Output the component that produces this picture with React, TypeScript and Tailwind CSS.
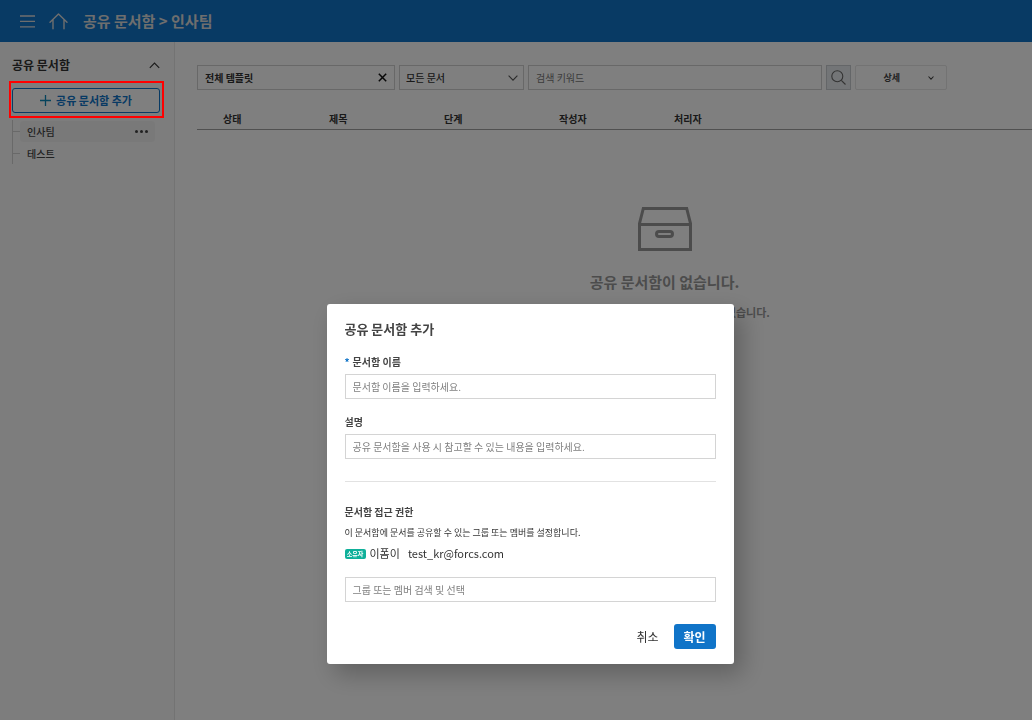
import React, { useState } from "react";

const FIELD =
  "block h-[25px] w-full border border-[#d4d4d4] bg-white px-[7px] text-[10px] text-[#333] outline-none placeholder:text-[#808080]";

function TreeItem({ label, active = false }: { label: string; active?: boolean }) {
  return (
    <li className="flex h-[22px] items-center">
      <span className="h-px w-[7px] bg-[#d2d2d2]" />
      <div
        className={
          active
            ? "flex h-[21px] flex-1 items-center justify-between rounded-sm bg-[#f2f2f2] px-[7px]"
            : "flex h-[21px] flex-1 items-center justify-between px-[7px]"
        }
      >
        <a href="#" className="text-[10px] font-medium text-[#444]">
          {label}
        </a>
        {active && (
          <button type="button" aria-label="더보기" className="flex gap-[2px]">
            <span className="size-[3px] rounded-full bg-[#444]" />
            <span className="size-[3px] rounded-full bg-[#444]" />
            <span className="size-[3px] rounded-full bg-[#444]" />
          </button>
        )}
      </div>
    </li>
  );
}

function Header() {
  return (
    <header className="flex h-[42px] items-center bg-[#1074c8] pl-5 text-[#ddd]">
      <button type="button" aria-label="메뉴">
        <svg width="15" height="13" viewBox="0 0 15 13" stroke="currentColor" strokeWidth="1.3">
          <path d="M0 1h15M0 6.3h15M0 11.8h15" />
        </svg>
      </button>
      <a href="#" aria-label="홈" className="ml-[14px]">
        <svg
          width="19"
          height="17"
          viewBox="0 0 19 17"
          fill="none"
          stroke="currentColor"
          strokeWidth="1.4"
          strokeLinecap="round"
          strokeLinejoin="round"
        >
          <path d="M1 9.2 9.5 1 18 9.2M4 6.8V15.8M15 6.8V15.8" />
        </svg>
      </a>
      <h1 className="ml-[15px] text-[15px] leading-6 font-bold">공유 문서함 &gt; 인사팀</h1>
    </header>
  );
}

function Sidebar() {
  return (
    <aside className="w-[175px] shrink-0 border-r border-[#e6e6e6] bg-[#fafafa] pr-[14px] pl-3">
      <div className="flex h-[46px] items-center justify-between">
        <h2 className="text-[12px] font-bold text-[#333]">공유 문서함</h2>
        <button type="button" aria-label="접기">
          <svg width="11" height="7" viewBox="0 0 11 7" fill="none" stroke="#333" strokeWidth="1.1">
            <path d="M.8 5.8 5.5 1l4.7 4.8" />
          </svg>
        </button>
      </div>
      <div className="relative">
        <button
          type="button"
          className="flex h-[25px] w-full items-center justify-center gap-[5px] rounded-[3px] border border-[#1074c8] bg-white text-[11px] font-bold text-[#1074c8]"
        >
          <svg width="11" height="11" viewBox="0 0 11 11" stroke="#0a86b8" strokeWidth="1.3">
            <path d="M0 5.5h11M5.5 0v11" />
          </svg>
          공유 문서함 추가
        </button>
        <span className="pointer-events-none absolute -top-[7px] -right-1 -bottom-[5px] -left-[3px] z-50 border-2 border-[#ff0000]" />
      </div>
      <ul className="mt-[7px] mr-[5px] border-l border-[#d2d2d2]">
        <TreeItem label="인사팀" active />
        <TreeItem label="테스트" />
      </ul>
    </aside>
  );
}

function Filters() {
  return (
    <form className="flex max-w-[750px] items-start gap-1" onSubmit={(e) => e.preventDefault()}>
      <div className="flex h-[25px] w-[198px] items-center border border-[#d0d0d0] bg-white pr-[7px]">
        <input
          aria-label="템플릿"
          defaultValue="전체 템플릿"
          className="h-full min-w-0 flex-1 bg-transparent pl-[7px] text-[10px] font-bold text-[#333] outline-none"
        />
        <button type="button" aria-label="지우기">
          <svg width="9" height="9" viewBox="0 0 9 9" stroke="#111" strokeWidth="1.5">
            <path d="M.8.8l7.4 7.4M8.2.8.8 8.2" />
          </svg>
        </button>
      </div>
      <div className="relative w-[125px]">
        <select
          aria-label="문서 종류"
          className="block h-[25px] w-full appearance-none border border-[#d0d0d0] bg-white pl-[6px] text-[10px] font-medium text-[#333] outline-none"
        >
          <option>모든 문서</option>
        </select>
        <svg
          className="pointer-events-none absolute top-[10px] right-[6px]"
          width="10"
          height="6"
          viewBox="0 0 10 6"
          fill="none"
          stroke="#555"
          strokeWidth="1.1"
        >
          <path d="M.6.6 5 5.2 9.4.6" />
        </svg>
      </div>
      <input
        aria-label="검색 키워드"
        placeholder="검색 키워드"
        className="h-[25px] min-w-0 flex-1 border border-[#d0d0d0] bg-white px-[7px] text-[10px] outline-none placeholder:text-[#777]"
      />
      <button
        type="submit"
        aria-label="검색"
        className="flex size-[25px] items-center justify-center border border-[#c8ccd0] bg-[#e6eaee]"
      >
        <svg width="15" height="15" viewBox="0 0 15 15" fill="none" stroke="#666" strokeWidth="1.1">
          <circle cx="6.3" cy="6.3" r="5.5" />
          <path d="m10.3 10.3 4.2 4.2" />
        </svg>
      </button>
      <button
        type="button"
        className="flex h-[25px] w-[92px] items-center justify-end gap-7 rounded-[2px] border border-[#e6e6e6] bg-white pr-[12px] text-[9px] font-bold text-[#444]"
      >
        상세
        <svg width="6" height="4" viewBox="0 0 6 4" fill="none" stroke="#444" strokeWidth="1.1">
          <path d="M.5.5 3 3.2 5.5.5" />
        </svg>
      </button>
    </form>
  );
}

function Documents() {
  return (
    <main className="min-w-0 flex-1 bg-white pt-[23px] pl-[22px]">
      <Filters />
      <table className="mt-[18px] w-full table-fixed border-collapse text-left text-[10px] text-[#333]">
        <thead>
          <tr className="h-[21px] border-b border-[#a0a0a0]">
            <th className="w-[132px] pl-[26px] font-bold">상태</th>
            <th className="w-[115px] font-bold">제목</th>
            <th className="w-[115px] font-bold">단계</th>
            <th className="w-[115px] font-bold">작성자</th>
            <th className="font-bold">처리자</th>
          </tr>
        </thead>
      </table>
      <div className="flex flex-col items-center pt-[76px] pl-[100px] text-[#999]">
        <svg width="56" height="46" viewBox="0 0 56 46" fill="none" stroke="#999" strokeWidth="3">
          <path d="M2.5 17.5 6.3 2.5h43.4l3.8 15v26H2.5zM2.5 18.5h51" />
          <rect x="19.5" y="25.5" width="16" height="5" rx="2.5" />
        </svg>
        <p className="mt-[18px] text-[15px] leading-6 font-bold">공유 문서함이 없습니다.</p>
        <p className="mt-[6px] text-[11px] leading-6 font-bold">
          조회할 수 있는 공유 문서함이 아직은 없습니다.
        </p>
      </div>
    </main>
  );
}

function AddFolderDialog({ onClose }: { onClose: () => void }) {
  return (
    <div className="fixed inset-0 z-40 flex items-start justify-center bg-black/50 pt-[304px] pl-7">
      <form
        role="dialog"
        aria-modal="true"
        aria-labelledby="dialog-title"
        onSubmit={(e) => {
          e.preventDefault();
          onClose();
        }}
        className="w-[407px] rounded-[3px] bg-white px-[18px] pt-[13px] pb-[15px] text-[#333] shadow-[8px_10px_24px_rgba(0,0,0,0.25)]"
      >
        <h2 id="dialog-title" className="text-[13px] leading-6 font-bold text-[#444]">
          공유 문서함 추가
        </h2>
        <label htmlFor="folder-name" className="mt-[9px] block text-[10px] leading-6 font-bold text-[#444]">
          <span className="mr-[3px] text-[#1074c8]">*</span>
          문서함 이름
        </label>
        <input id="folder-name" placeholder="문서함 이름을 입력하세요." className={FIELD} />
        <label htmlFor="folder-desc" className="mt-[11px] block text-[10px] leading-6 font-bold text-[#444]">
          설명
        </label>
        <input
          id="folder-desc"
          placeholder="공유 문서함을 사용 시 참고할 수 있는 내용을 입력하세요."
          className={FIELD}
        />
        <hr className="mt-[22px] border-[#e2e2e2]" />
        <label htmlFor="folder-members" className="mt-[18px] block text-[10px] leading-6 font-bold text-[#444]">
          문서함 접근 권한
        </label>
        <p className="text-[9px] leading-[17px] text-[#333]">
          이 문서함에 문서를 공유할 수 있는 그룹 또는 멤버를 설정합니다.
        </p>
        <div className="flex h-[25px] items-center text-[11px]">
          <span className="mr-1 flex h-[10px] w-[21px] items-center justify-center rounded-[2px] bg-[#0fb09a] text-[6px] font-bold text-white">
            소유자
          </span>
          <span className="mr-2">이폼이</span>
          <span>test_kr@forcs.com</span>
        </div>
        <input
          id="folder-members"
          placeholder="그룹 또는 멤버 검색 및 선택"
          className={"mt-[11px] " + FIELD}
        />
        <div className="mt-[22px] flex justify-end gap-[15px] text-[12px]">
          <button type="button" onClick={onClose}>
            취소
          </button>
          <button type="submit" className="h-[25px] w-[42px] rounded-[3px] bg-[#1074c8] font-bold text-white">
            확인
          </button>
        </div>
      </form>
    </div>
  );
}

export default function App() {
  const [open, setOpen] = useState(true);
  return (
    <div className="flex min-h-screen flex-col font-['Noto_Sans_CJK_KR',sans-serif]">
      <Header />
      <div className="flex flex-1">
        <Sidebar />
        <Documents />
      </div>
      {open && <AddFolderDialog onClose={() => setOpen(false)} />}
    </div>
  );
}
